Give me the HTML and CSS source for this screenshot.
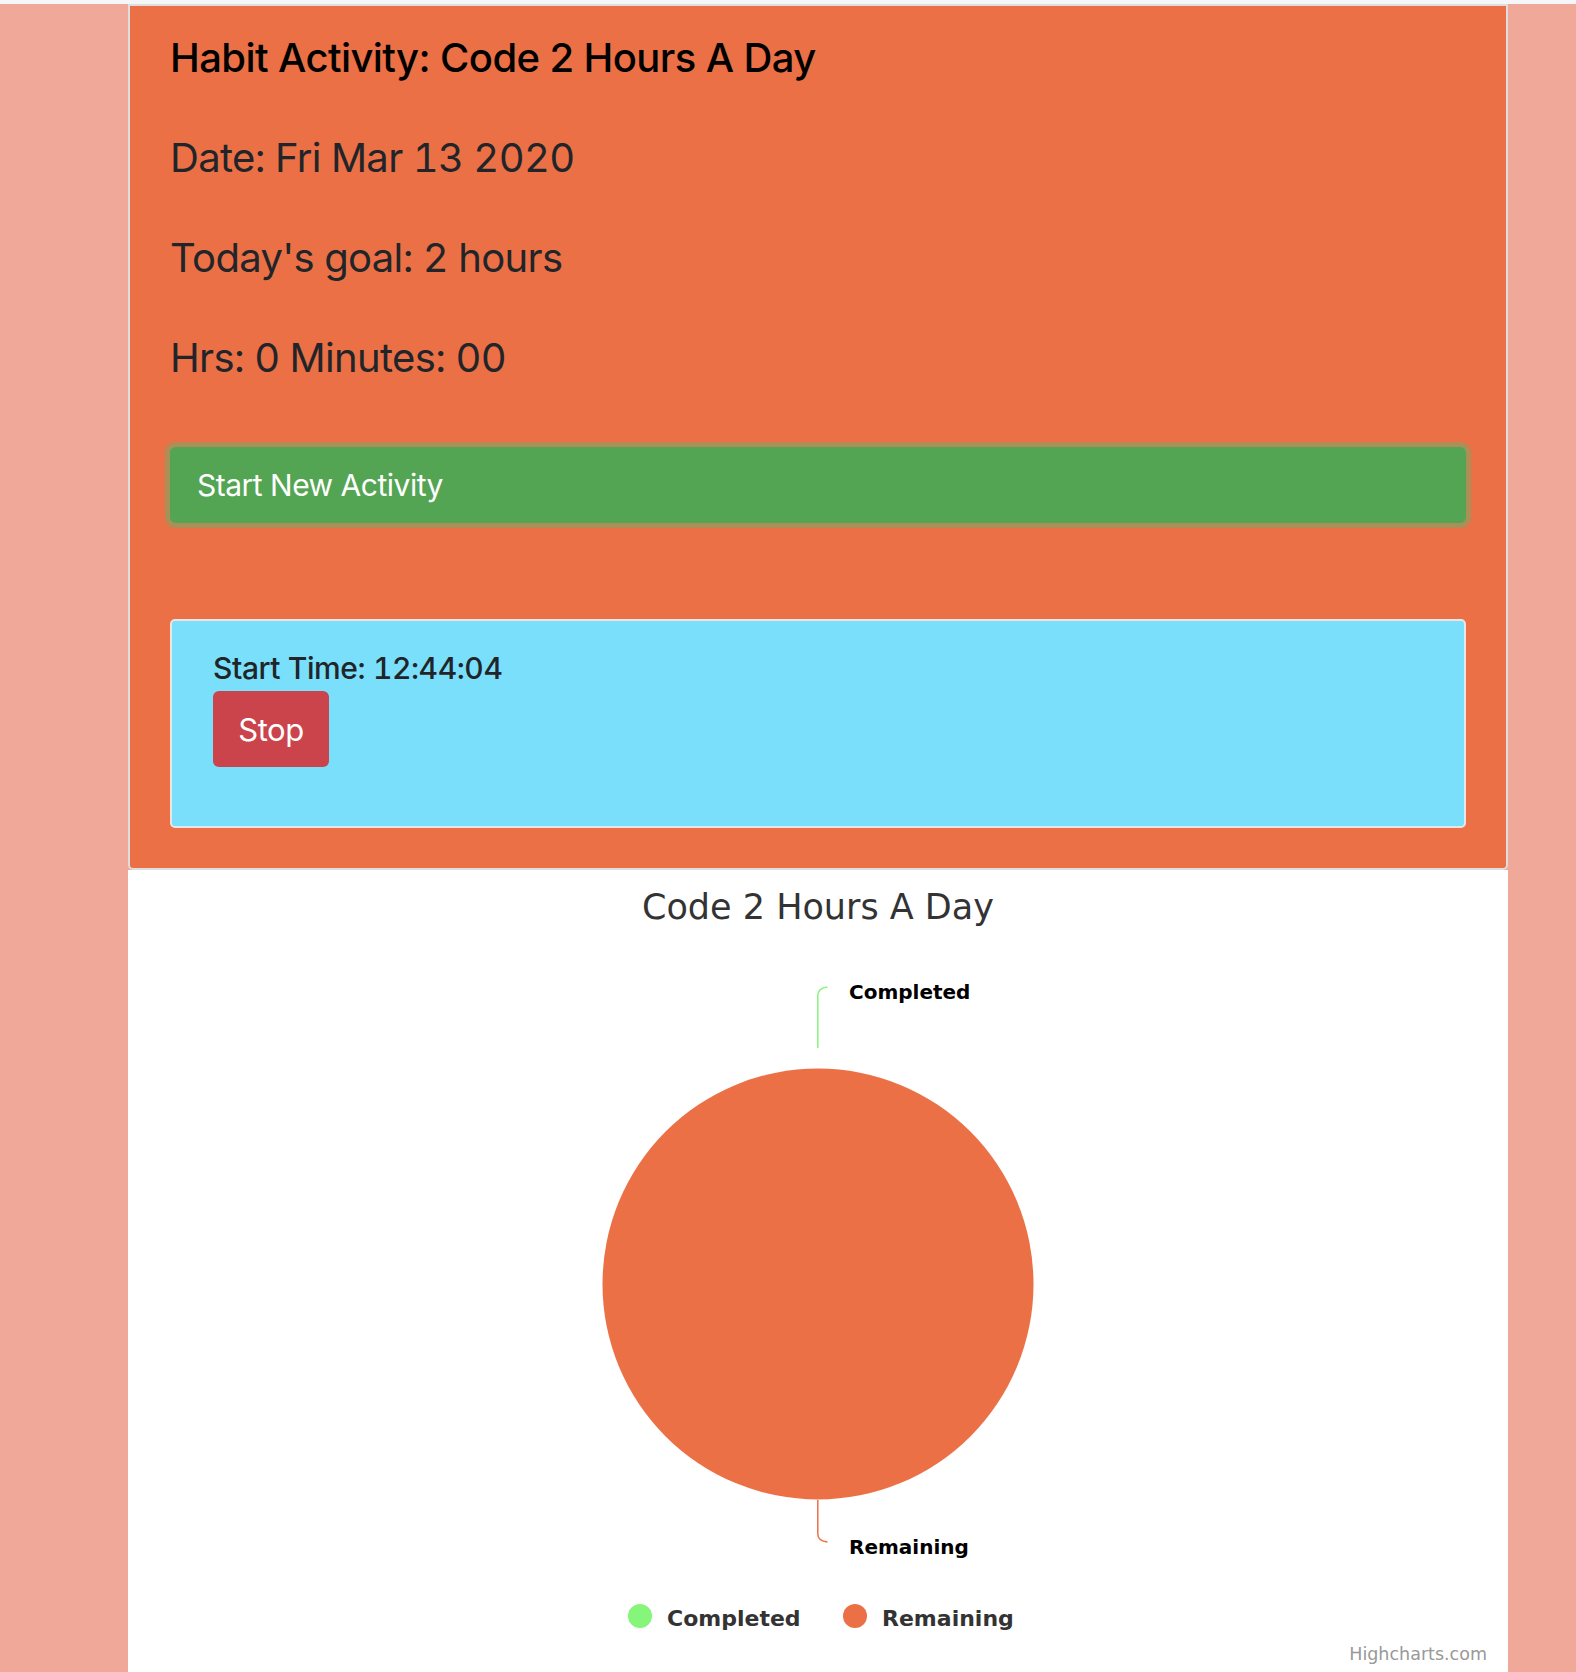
FILE: index.html
```html
<!DOCTYPE html>
<html lang="en">
<head>
  <meta charset="UTF-8">
  <title>Habit Activity</title>
  <link rel="stylesheet" href="styles.css">
</head>
<body>
  <div class="top-strip"></div>
  <div class="page">
    <div class="activity-card">
      <h3 class="habit-title">Habit Activity: Code 2 Hours A Day</h3>
      <p class="info-line">Date: Fri Mar 13 2020</p>
      <p class="info-line">Today's goal: 2 hours</p>
      <p class="info-line">Hrs: 0 Minutes: 00</p>
      <button class="btn-start">Start New Activity</button>
      <div class="timer-box">
        <div class="start-time">Start Time: 12:44:04</div>
        <button class="btn-stop">Stop</button>
      </div>
    </div>
    <!-- ===== Pie chart ===== -->
    <div class="chart">
      <svg width="1380" height="802" viewBox="0 0 1380 802">
        <text class="chart-title" x="690" y="49" text-anchor="middle">Code 2 Hours A Day</text>
        <circle cx="690" cy="414" r="215.5" fill="#ec7045"/>
        <path d="M689.8 178 L689.8 126 Q689.8 118 699.5 117" fill="none" stroke="#86f57b" stroke-width="1.5"/>
        <path d="M689.8 630 L689.8 664 Q689.8 671 699.5 672" fill="none" stroke="#ec7045" stroke-width="1.5"/>
        <text class="data-label" x="721" y="129">Completed</text>
        <text class="data-label" x="721" y="684">Remaining</text>
        <circle cx="512" cy="746" r="12" fill="#86f57b"/>
        <text class="legend-item" x="539" y="756">Completed</text>
        <circle cx="727" cy="746" r="12" fill="#ec7045"/>
        <text class="legend-item" x="754" y="756">Remaining</text>
        <text class="credits" x="1359" y="790" text-anchor="end">Highcharts.com</text>
      </svg>
    </div>
  </div>
</body>
</html>
```

FILE: styles.css
```css
body {
  margin: 0;
  background-color: #f0a899;
  font-family: 'Inter', 'Roboto', sans-serif;
  color: #212529;
}
.top-strip {
  height: 4px;
  background-color: #f4f6f9;
}
.page {
  width: 1380px;
  margin-left: 128px;
}
.activity-card {
  background-color: #ec7045;
  border: 2px solid #dedede;
  border-radius: 0 0 5px 5px;
  padding: 28px 40px 40px 40px;
}
.habit-title {
  font-size: 40px;
  font-weight: 500;
  line-height: 48px;
  color: #000;
  margin: 0 0 52px 0;
  letter-spacing: -0.6px;
}
.info-line {
  font-size: 40px;
  font-weight: 400;
  line-height: 48px;
  margin: 0 0 52px 0;
  letter-spacing: -0.65px;
  font-variant-numeric: tabular-nums;
}
.btn-start {
  display: block;
  width: 100%;
  height: 76px;
  margin-top: 65px;
  padding: 0 27px;
  text-align: left;
  font-family: inherit;
  font-size: 30px;
  color: #fff;
  background-color: #53a553;
  border: none;
  border-radius: 6px;
  box-shadow: 0 0 0 5px #aa8f56;
  letter-spacing: -0.5px;
}
.timer-box {
  margin-top: 96px;
  background-color: #79dffb;
  border: 2px solid #e6e6e6;
  border-radius: 5px;
  padding: 29px 40px 59px 41px;
}
.start-time {
  font-size: 30px;
  line-height: 36px;
  font-weight: 500;
  letter-spacing: -0.4px;
  font-variant-numeric: tabular-nums;
}
.btn-stop {
  display: block;
  margin-top: 5px;
  width: 116px;
  height: 76px;
  font-family: inherit;
  font-size: 31px;
  color: #fff;
  background-color: #cb444b;
  border: none;
  border-radius: 6px;
  letter-spacing: -0.4px;
}
.chart {
  height: 802px;
  background-color: #fff;
}
.chart svg {
  display: block;
}
.chart-title {
  font-family: 'DejaVu Sans', sans-serif;
  font-size: 35px;
  fill: #333;
}
.data-label {
  font-family: 'DejaVu Sans', sans-serif;
  font-size: 20px;
  font-weight: bold;
  fill: #000;
}
.legend-item {
  font-family: 'DejaVu Sans', sans-serif;
  font-size: 22px;
  font-weight: bold;
  fill: #333;
}
.credits {
  font-family: 'DejaVu Sans', sans-serif;
  font-size: 17.5px;
  fill: #999;
}
```
